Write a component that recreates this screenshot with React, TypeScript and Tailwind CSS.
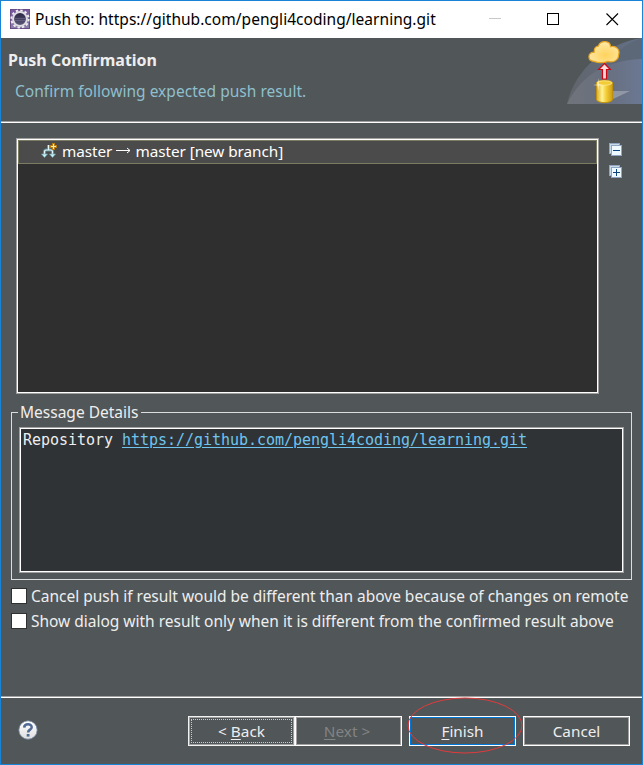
import React from "react";

function EclipseIcon() {
  return (
    <svg width="20" height="20" viewBox="0 0 20 20">
      <defs>
        <linearGradient id="ecl" x1="0" y1="0" x2="0" y2="1">
          <stop offset="0" stopColor="#76569a" />
          <stop offset="1" stopColor="#8b83ab" />
        </linearGradient>
        <linearGradient id="core" x1="0" y1="0" x2="0" y2="1">
          <stop offset="0" stopColor="#29213f" />
          <stop offset="1" stopColor="#5e5c7c" />
        </linearGradient>
      </defs>
      <rect width="20" height="20" fill="url(#ecl)" />
      <rect x=".5" y=".5" width="19" height="19" fill="none" stroke="#694b87" />
      <circle cx="10" cy="10" r="8.6" fill="none" stroke="#f0edf0" strokeWidth="2" strokeDasharray="2.4 2.1" />
      <circle cx="10" cy="10" r="6.9" fill="url(#core)" stroke="#dedbe2" strokeWidth="2" />
      <path d="M4.7 9.5h10.6M5 11.5h10" stroke="#746f93" strokeWidth=".6" />
    </svg>
  );
}

function PushBanner() {
  return (
    <svg width="75" height="66" viewBox="0 0 75 66" className="block shrink-0">
      <defs>
        <linearGradient id="sweep" x1="0" y1="0" x2="1" y2="0">
          <stop offset="0" stopColor="#70747b" />
          <stop offset=".5" stopColor="#686f7e" />
          <stop offset="1" stopColor="#6b7893" />
        </linearGradient>
        <linearGradient id="outer" x1="0" y1="0" x2="1" y2="0">
          <stop offset="0" stopColor="#61656b" />
          <stop offset="1" stopColor="#627087" />
        </linearGradient>
        <radialGradient id="cloud" cx=".55" cy=".65" r=".6">
          <stop offset="0" stopColor="#ffd35c" />
          <stop offset="1" stopColor="#ffe7a3" />
        </radialGradient>
        <linearGradient id="gold" x1="0" y1="0" x2="1" y2="0">
          <stop offset="0" stopColor="#dba91d" />
          <stop offset=".35" stopColor="#fff294" />
          <stop offset=".6" stopColor="#f4ce38" />
          <stop offset="1" stopColor="#cc9b13" />
        </linearGradient>
      </defs>
      <path d="M0 66C8 31 38 6 75 0V66Z" fill="url(#outer)" />
      <path d="M43 26C48 14 60 5 75 0V22C64 22 53 23 43 29Z" fill="#5c6777" />
      <path d="M0 66C14 37 40 22 75 21V66Z" fill="url(#sweep)" />
      <path d="M45 53H63L44 62Z" fill="#a1a8b4" opacity=".7" />
      <path d="M27 23.4C20 23 20.4 14 27.2 14.2C26.5 9.2 29.8 8.3 31.2 8.2C33.5 1.8 43.5 2.4 43.5 8.7C49 7 53.5 12.2 51.6 17C51.5 23 45 24.7 41 23.4C36.5 25 30.5 24.7 27 23.4Z" fill="url(#cloud)" stroke="#e6a622" strokeWidth="1.2" />
      <path d="M37.5 25.5L43.3 31.5H39.5V41H35.5V31.5H31.7Z" fill="#ffd9dc" stroke="#cc0712" strokeWidth="1.2" />
      <path d="M29.5 44.5C31 41.5 44 41.5 45.5 44.5V62C43 65.5 32 65.5 29.5 62Z" fill="url(#gold)" stroke="#bf900d" />
      <ellipse cx="37.5" cy="45" rx="7.5" ry="2.2" fill="#f3cb37" stroke="#fff0a0" strokeWidth=".7" />
      <path d="M31.2 40L31.8 46.4L36 47L31.8 47.6L31.2 53L30.6 47.6L26 47L30.6 46.4Z" fill="#fff7ce" opacity=".9" />
    </svg>
  );
}

function BranchIcon() {
  return (
    <svg width="16" height="16" viewBox="0 0 16 16" className="shrink-0">
      <path d="M7.5 2V7M3.5 11V8.5Q3.5 7 5.5 7H9.5Q11.5 7 11.5 8.5V11" fill="none" stroke="#5e8e98" strokeWidth="2.8" />
      <path d="M7.5 2V7M3.5 11V8.5Q3.5 7 5.5 7H9.5Q11.5 7 11.5 8.5V11" fill="none" stroke="#e4f8fb" strokeWidth="1.2" />
      <path d="M.5 11H6.5L3.5 14.5ZM8.5 11H14.5L11.5 14.5Z" fill="#c9f4f8" stroke="#6fa8b2" strokeWidth=".7" />
      <path d="M12.5 0V7M9 3.5H16" stroke="#b67b12" strokeWidth="3" />
      <path d="M12.5 1V6M10 3.5H15" stroke="#ffe9a0" strokeWidth="1.1" />
    </svg>
  );
}

function TreeIcon({ expand }: { expand?: boolean }) {
  return (
    <svg width="13" height="13" viewBox="0 0 13 13" className="block" shapeRendering="crispEdges">
      <rect x=".5" y=".5" width="10" height="10" fill="#c9dcec" stroke="#8fa5c2" />
      <rect x="2.5" y="2.5" width="10" height="10" fill="#eefaff" stroke="#8fa5c2" />
      <path d="M4 7.5H11" stroke="#0b4480" />
      {expand && <path d="M7.5 4V11" stroke="#0b4480" />}
    </svg>
  );
}

function HelpIcon() {
  return (
    <svg width="20" height="20" viewBox="0 0 20 20">
      <defs>
        <linearGradient id="help" x1="0" y1="0" x2="0" y2="1">
          <stop offset="0" stopColor="#fff" />
          <stop offset="1" stopColor="#dededf" />
        </linearGradient>
      </defs>
      <circle cx="10" cy="10" r="9.2" fill="url(#help)" stroke="#70829e" strokeWidth=".8" />
      <path d="M6.2 7.6C6.3 3.2 13.8 3.3 13.7 7.2C13.6 9.8 10.1 9.5 10.1 12.6" fill="none" stroke="#506b96" strokeWidth="2.5" />
      <rect x="8.7" y="14" width="2.8" height="2.6" fill="#506b96" />
    </svg>
  );
}

function Rule() {
  return <div className="h-[2px] shrink-0 border-t border-[#a0a0a0] bg-white" />;
}

function CheckRow({ children }: { children: React.ReactNode }) {
  return (
    <label className="flex h-[25px] items-center gap-1">
      <span className="size-4 shrink-0 border border-[#303030] bg-white" />
      <span className="tracking-[-0.015px] whitespace-nowrap">{children}</span>
    </label>
  );
}

export default function App() {
  return (
    <div className="relative flex h-[765px] w-[643px] flex-col overflow-hidden border border-[#1883d7] bg-[#515658] font-['Noto_Sans','Open_Sans',sans-serif] text-[15.5px] leading-5 text-[#eeeeee]">
      <header className="flex h-[37px] shrink-0 items-center bg-white pb-px pl-[9px] text-black">
        <EclipseIcon />
        <h1 className="ml-[5px] tracking-[0.035px] whitespace-nowrap">Push to: https://github.com/pengli4coding/learning.git</h1>
        <svg className="mt-px mr-[22px] ml-auto" width="131" height="13" viewBox="0 0 131 13" fill="none">
          <path d="M0 5.5H12" stroke="#c8c8c8" />
          <rect x="58.5" y=".5" width="11" height="11" stroke="#000" />
          <path d="M117.5 .5L129 12M129 .5L117.5 12" stroke="#000" strokeWidth="1.1" />
        </svg>
      </header>
      <section className="flex h-[83px] shrink-0 justify-between">
        <div className="pt-3 pl-[7px]">
          <h2 className="text-base leading-5 font-bold whitespace-nowrap">Push Confirmation</h2>
          <p className="mt-[11px] ml-[7px] tracking-[0.03px] whitespace-nowrap text-[#8fbfcd]">Confirm following expected push result.</p>
        </div>
        <PushBanner />
      </section>
      <Rule />
      <main className="flex h-[573px] shrink-0 flex-col pt-[15px] pl-[10px]">
        <div className="flex gap-[10px] pl-[5px]">
          <div className="h-[256px] w-[583px] border border-[#a0a0a0]">
            <div className="h-full border border-white bg-[#2f2f2f]">
              <div className="flex h-6 items-center border border-[#7c7c62] bg-[#4b4b4b] pb-[2px] pl-[22px] text-[15.3px] text-white">
                <BranchIcon />
                <span className="ml-[5px] tracking-[-0.05px] whitespace-nowrap">master</span>
                <svg className="mx-1" width="15" height="8" viewBox="0 0 15 8" fill="none" stroke="white"><path d="M0 3.5H14M11 1L14 3.5L11 6" /></svg>
                <span className="tracking-[-0.05px] whitespace-nowrap">master [new branch]</span>
              </div>
            </div>
          </div>
          <div className="flex flex-col gap-[9px] pt-[5px]">
            <TreeIcon />
            <TreeIcon expand />
          </div>
        </div>
        <fieldset className="mt-[8px] h-[178px] w-[621px] border border-[#dddddd] pl-[7px]">
          <legend className="-ml-px h-5 w-[123px] pl-[2px] whitespace-nowrap">Message Details</legend>
          <div className="mt-[5px] h-[146px] w-[605px] border border-[#a0a0a0]">
            <div className="h-full border border-white bg-[#2f3336] pt-px pl-[2px] font-['DejaVu_Sans_Mono','Liberation_Mono',monospace] text-[15px] tracking-[-0.03px] whitespace-nowrap">
              Repository <a className="text-[#6fc5ee] underline underline-offset-2">https://github.com/pengli4coding/learning.git</a>
            </div>
          </div>
        </fieldset>
        <div className="mt-[3px]">
          <CheckRow>Cancel push if result would be different than above because of changes on remote</CheckRow>
          <CheckRow>Show dialog with result only when it is different from the confirmed result above</CheckRow>
        </div>
      </main>
      <Rule />
      <footer className="flex h-[66px] shrink-0 items-center pl-[17px]">
        <div className="pb-[2px]"><HelpIcon /></div>
        <div className="ml-[150px] flex text-[15.3px]">
          <button className="h-[30px] w-[107px] border border-[#f2f2f2] bg-[#515658]">
            <span className="block h-full border border-[#a0a0a0] p-px">
              <span className="flex h-full items-center justify-center border border-dotted border-[#d3c7cb]"><span>&lt; <u className="underline-offset-2">B</u>ack</span></span>
            </span>
          </button>
          <button className="h-[30px] w-[107px] border border-white text-[#828484]">
            <span className="flex h-full items-center justify-center border border-[#a0a0a0]"><span className="mr-[3px]"><u className="underline-offset-2">N</u>ext &gt;</span></span>
          </button>
          <button className="ml-[7px] h-[30px] w-[107px] border border-white">
            <span className="flex h-full items-center justify-center border border-[#0078d7]"><span><u className="underline-offset-2">F</u>inish</span></span>
          </button>
          <button className="ml-[7px] h-[30px] w-[107px] border border-white">
            <span className="flex h-full items-center justify-center border border-[#a0a0a0]">Cancel</span>
          </button>
        </div>
      </footer>
      <svg className="pointer-events-none absolute top-[696px] left-[406px]" width="117" height="58" viewBox="0 0 117 58" fill="none">
        <ellipse cx="58" cy="28.5" rx="57" ry="27.5" stroke="#e13b3c" />
      </svg>
    </div>
  );
}
